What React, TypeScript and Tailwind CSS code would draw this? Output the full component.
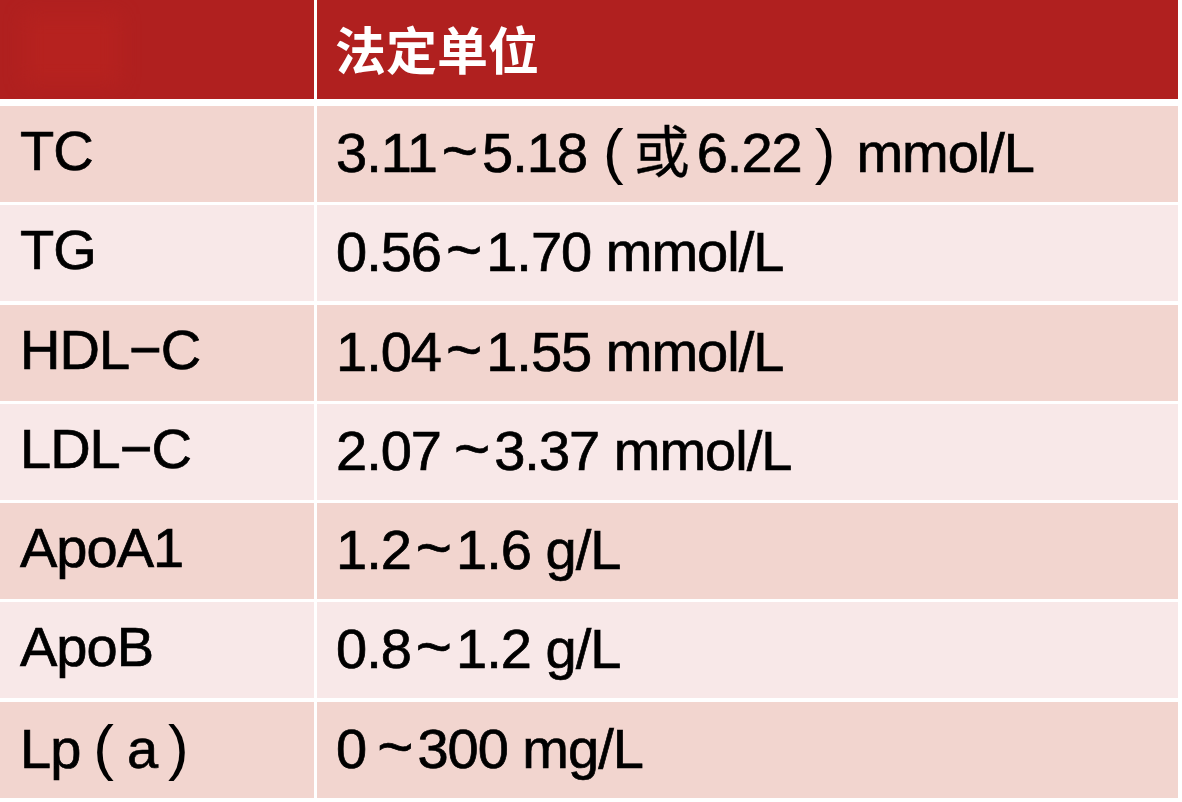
import React from "react";

const Tilde = () => <span className="inline-block mx-[5px] text-[62px] leading-none">~</span>;
const P = ({ c, cls }: { c: string; cls: string }) => (
  <span className={`inline-block text-[62px] leading-none [-webkit-text-stroke:0px_black] ${cls}`}>{c}</span>
);

const rows: { name: React.ReactNode; value: React.ReactNode; shade: "a" | "b" }[] = [
  {
    name: "TC",
    value: (
      <>
        3.11
        <Tilde />
        5.18
        <P c="(" cls="ml-[16px] mr-[11px]" />
        <span style={{ fontFamily: '"Noto Sans CJK SC", sans-serif' }} className="[-webkit-text-stroke:0.3px_black]">
          或
        </span>
        <span className="inline-block ml-[8px]">6.22</span>
        <P c=")" cls="ml-[13px] mr-[22px]" />
        mmol/L
      </>
    ),
    shade: "a",
  },
  { name: "TG", value: (<>0.56<Tilde />1.70 mmol/L</>), shade: "b" },
  { name: "HDL\u2212C", value: (<>1.04<Tilde />1.55 mmol/L</>), shade: "a" },
  { name: "LDL\u2212C", value: (<>2.07<span className="inline-block w-[8px]" /><Tilde />3.37 mmol/L</>), shade: "b" },
  { name: "ApoA1", value: (<>1.2<Tilde />1.6 g/L</>), shade: "a" },
  { name: "ApoB", value: (<>0.8<Tilde />1.2 g/L</>), shade: "b" },
  {
    name: (
      <>
        Lp
        <P c="(" cls="ml-[13px]" />
        <span className="inline-block ml-[14px]">a</span>
        <P c=")" cls="ml-[11px]" />
      </>
    ),
    value: (<>0<span className="inline-block w-[6px]" /><Tilde />300 mg/L</>),
    shade: "a",
  },
];

export default function App() {
  return (
    <div
      className="w-[1182px] h-[802px] bg-white overflow-hidden pr-[4px]"
      style={{ fontFamily: '"Liberation Sans", "Noto Sans CJK SC", sans-serif' }}
    >
      <div className="grid grid-cols-[314px_1fr] gap-x-[3px] h-[99px]">
        <div className="bg-[#b0201f] relative overflow-hidden">
          <div className="absolute left-[24px] top-[14px] w-[96px] h-[70px] bg-[#b9231f] blur-[10px] opacity-70" />
        </div>
        <div className="bg-[#b0201f] flex items-center pl-[18px] pb-[3px]">
          <span
            className="text-white text-[51px] font-bold leading-none"
            style={{ fontFamily: '"Noto Sans CJK SC", sans-serif' }}
          >
            法定单位
          </span>
        </div>
      </div>
      <div className="mt-[7px] flex flex-col gap-[3.3px]">
        {rows.map((r, i) => (
          <div key={i} className="grid grid-cols-[314px_1fr] gap-x-[3px] h-[96px]">
            <div
              className={`${r.shade === "a" ? "bg-[#f2d5cf]" : "bg-[#f8e8e8]"} flex items-center pl-[20px] pb-[6px]`}
            >
              <span className="text-black text-[56px] leading-none tracking-[-1px] whitespace-pre [-webkit-text-stroke:0.7px_black]">
                {r.name}
              </span>
            </div>
            <div
              className={`${r.shade === "a" ? "bg-[#f2d5cf]" : "bg-[#f8e8e8]"} flex items-center pl-[19px] pb-[6px]`}
            >
              <span className="text-black text-[56px] leading-none tracking-[-1px] whitespace-pre [-webkit-text-stroke:0.7px_black]">
                {r.value}
              </span>
            </div>
          </div>
        ))}
      </div>
    </div>
  );
}
